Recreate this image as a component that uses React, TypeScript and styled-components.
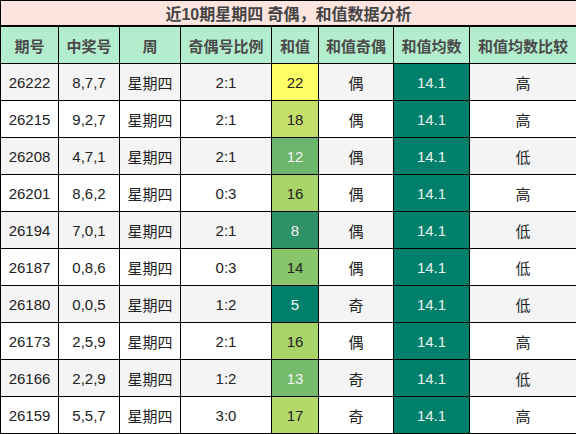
import { createGlobalStyle } from "styled-components";
import styled from "styled-components";

const GlobalStyle = createGlobalStyle`
  html, body {
    margin: 0;
    padding: 0;
    background: #ffffff;
  }
  body {
    font-family: "Liberation Sans", "Noto Sans CJK SC", sans-serif;
  }
`;

type Row = {
  issue: string;
  nums: string;
  ratio: string;
  sum: number;
  parity: string;
  compare: string;
};

const rows: Row[] = [
  { issue: "26222", nums: "8,7,7", ratio: "2:1", sum: 22, parity: "偶", compare: "高" },
  { issue: "26215", nums: "9,2,7", ratio: "2:1", sum: 18, parity: "偶", compare: "高" },
  { issue: "26208", nums: "4,7,1", ratio: "2:1", sum: 12, parity: "偶", compare: "低" },
  { issue: "26201", nums: "8,6,2", ratio: "0:3", sum: 16, parity: "偶", compare: "高" },
  { issue: "26194", nums: "7,0,1", ratio: "2:1", sum: 8, parity: "偶", compare: "低" },
  { issue: "26187", nums: "0,8,6", ratio: "0:3", sum: 14, parity: "偶", compare: "低" },
  { issue: "26180", nums: "0,0,5", ratio: "1:2", sum: 5, parity: "奇", compare: "低" },
  { issue: "26173", nums: "2,5,9", ratio: "2:1", sum: 16, parity: "偶", compare: "高" },
  { issue: "26166", nums: "2,2,9", ratio: "1:2", sum: 13, parity: "奇", compare: "低" },
  { issue: "26159", nums: "5,5,7", ratio: "3:0", sum: 17, parity: "奇", compare: "高" },
];

// heat colours for the sum column
const sumColors: Record<number, { bg: string; fg: string }> = {
  22: { bg: "#ffff66", fg: "#222" },
  18: { bg: "#c5e06a", fg: "#222" },
  17: { bg: "#b3da69", fg: "#222" },
  16: { bg: "#a8d468", fg: "#222" },
  14: { bg: "#89c56a", fg: "#222" },
  13: { bg: "#75bb6b", fg: "#f4f4f4" },
  12: { bg: "#6bb56c", fg: "#f4f4f4" },
  8: { bg: "#2e9168", fg: "#f4f4f4" },
  5: { bg: "#00806a", fg: "#f4f4f4" },
};

const widths = [58, 61, 61, 91, 47, 75, 76, 107];
const headers = ["期号", "中奖号", "周", "奇偶号比例", "和值", "和值奇偶", "和值均数", "和值均数比较"];

const Table = styled.table`
  width: 576px;
  border-collapse: collapse;
  table-layout: fixed;
  font-size: 15px;
  color: #222;
`;

const TitleCell = styled.th`
  height: 24px;
  padding: 0;
  background: #fde5df;
  color: #444;
  font-size: 16px;
  font-weight: bold;
  border: 1px solid #000;
  border-bottom: 2px solid #000;
  text-align: center;
`;

const HeadCell = styled.th`
  height: 36px;
  padding: 0;
  background: #b4edcd;
  color: #4a4a4a;
  font-weight: bold;
  font-size: 15px;
  border: 1px solid #000;
  text-align: center;
`;

const BodyRow = styled.tr<{ $shade: boolean }>`
  background: ${(p) => (p.$shade ? "#f4f4f4" : "#ffffff")};
`;

const Cell = styled.td`
  height: 36px;
  padding: 0;
  border: 1px solid #000;
  text-align: center;
`;

const SumCell = styled(Cell)<{ $bg: string; $fg: string }>`
  background: ${(p) => p.$bg};
  color: ${(p) => p.$fg};
`;

const AvgCell = styled(Cell)`
  background: #00806a;
  color: #e8f2ee;
`;

export default function App() {
  return (
    <>
      <GlobalStyle />
      <Table>
        <colgroup>
          {widths.map((w, i) => (
            <col key={i} style={{ width: w }} />
          ))}
        </colgroup>
        <thead>
          <tr>
            <TitleCell colSpan={8}>近10期星期四 奇偶，和值数据分析</TitleCell>
          </tr>
          <tr>
            {headers.map((h) => (
              <HeadCell key={h}>{h}</HeadCell>
            ))}
          </tr>
        </thead>
        <tbody>
          {rows.map((r, i) => {
            const c = sumColors[r.sum];
            return (
              <BodyRow key={r.issue} $shade={i % 2 === 0}>
                <Cell>{r.issue}</Cell>
                <Cell>{r.nums}</Cell>
                <Cell>星期四</Cell>
                <Cell>{r.ratio}</Cell>
                <SumCell $bg={c.bg} $fg={c.fg}>
                  {r.sum}
                </SumCell>
                <Cell>{r.parity}</Cell>
                <AvgCell>14.1</AvgCell>
                <Cell>{r.compare}</Cell>
              </BodyRow>
            );
          })}
        </tbody>
      </Table>
    </>
  );
}
